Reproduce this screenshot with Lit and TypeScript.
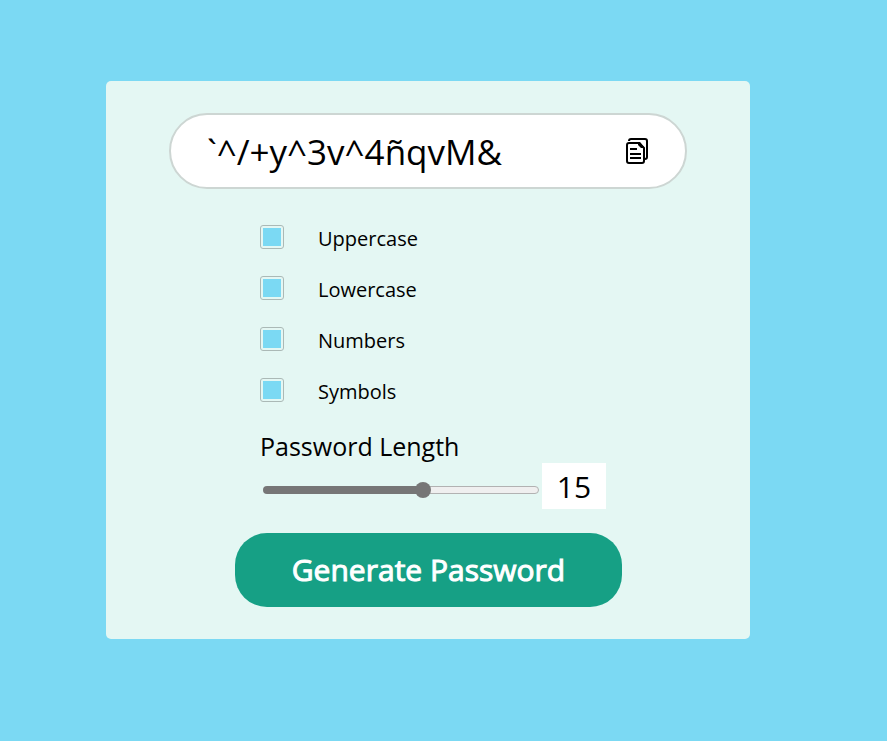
import { LitElement, html, css } from "lit";
import { customElement, state } from "lit/decorators.js";

@customElement("app-root")
export class AppRoot extends LitElement {
  @state() password = "`^/+y^3v^4ñqvM&";
  @state() length = 15;
  static styles = css`
    :host { display: flow-root; height: 741px; background: #7bd9f3; font-family: "Open Sans", sans-serif; color: #000; overflow: hidden; }
    * { box-sizing: border-box; }
    .card { width: 644px; height: 558px; margin: 81px 0 0 106px; border-radius: 5px; background: #e4f7f3; padding-top: 32px; display: flex; flex-direction: column; }
    .output { margin-left: 63px; width: 518px; height: 76px; border: 2px solid #cdd6d3; border-radius: 38px; background: #fff; display: flex; align-items: center; justify-content: space-between; padding: 0 36px; font-size: 35px; }
    .copy { width: 22px; height: 26px; display: block; margin-right: 1px; }
    .options { margin: 36px 0 0 154px; display: flex; flex-direction: column; gap: 27px; }
    .option { display: flex; gap: 34px; height: 24px; font-size: 20px; line-height: 28px; }
    .box { width: 24px; height: 24px; border: 1px solid #abb9b6; border-radius: 3px; padding: 2px; }
    .fill { display: block; width: 18px; height: 18px; background: #7bd9f3; }
    .title { margin: 26px 0 0 154px; font-size: 25px; line-height: 36px; }
    .length { margin: -1px 0 0 157px; height: 46px; display: flex; align-items: center; }
    .range { width: 276px; height: 16px; display: flex; align-items: center; margin-top: 8px; }
    .done { width: 160px; height: 8px; background: #767676; border-radius: 4px 0 0 4px; }
    .thumb { width: 16px; height: 16px; border-radius: 50%; background: #767676; margin: 0 -8px; z-index: 1; }
    .rest { flex: 1; height: 8px; border: 1px solid #b2b2b2; background: #efefef; border-radius: 0 4px 4px 0; }
    .value { width: 64px; height: 46px; margin-left: 3px; background: #fff; font-size: 30px; line-height: 48px; text-align: center; }
    button { margin: 24px 0 0 129px; width: 387px; height: 74px; border: 0; border-radius: 32px; background: #16a085; color: #fff; font: 400 30px "Open Sans", sans-serif; -webkit-text-stroke: 1px #fff; padding: 0 0 2px; }
  `;
  render() {
    return html`<main class="card">
      <div class="output"><span>${this.password}</span>
        <svg class="copy" viewBox="0 0 22 26" fill="none" stroke="#000" stroke-width="2"><path d="M3 3q0-2 2-2H19q2 0 2 2v16q0 2-2 2M1 7q0-2 2-2h10l5 5v13q0 2-2 2H3q-2 0-2-2zM4 11h7M4 16h11M4 20h11"/><path d="M12 4v3l3 3h3v-1l-4-5z" fill="#000" stroke="none"/></svg>
      </div>
      <div class="options">${["Uppercase", "Lowercase", "Numbers", "Symbols"].map(
        (t) => html`<label class="option"><span class="box"><span class="fill"></span></span><span>${t}</span></label>`
      )}</div>
      <div class="title">Password Length</div>
      <div class="length"><div class="range"><div class="done"></div><div class="thumb"></div><div class="rest"></div></div><div class="value">${this.length}</div></div>
      <button>Generate Password</button>
    </main>`;
  }
}
